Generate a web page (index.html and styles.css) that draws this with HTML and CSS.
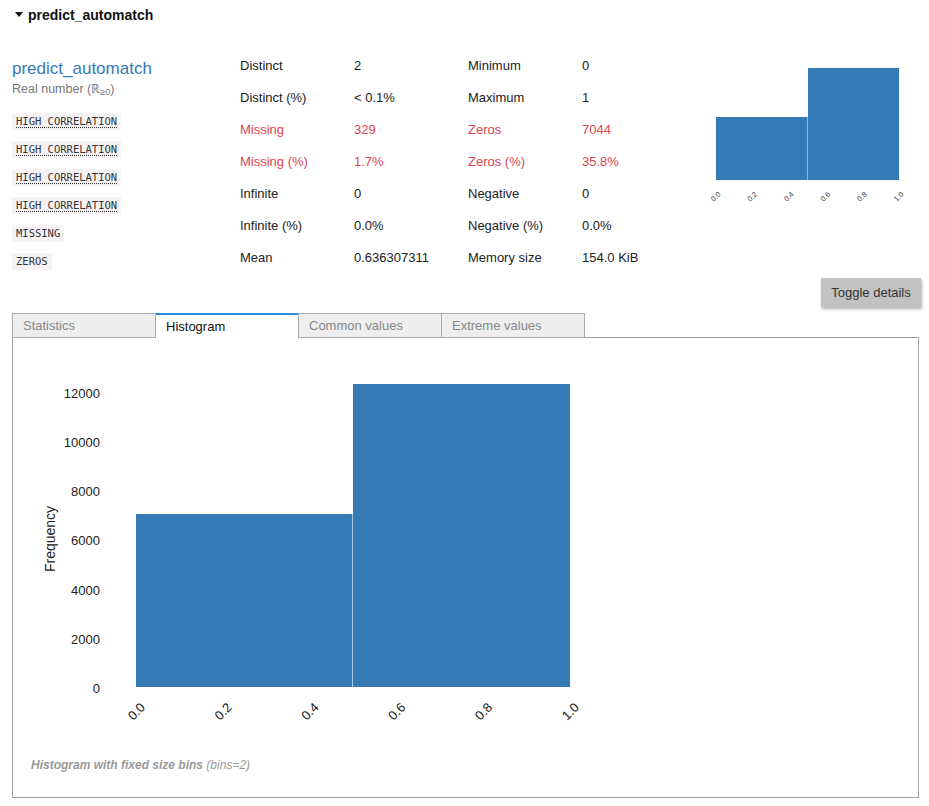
FILE: index.html
```html
<!DOCTYPE html>
<html>
<head>
<meta charset="utf-8">
<link rel="stylesheet" href="styles.css">
</head>
<body>
<div class="page">
  <div class="header"><span class="caret"></span>predict_automatch</div>

  <div class="overview">
    <div class="varinfo">
      <div class="varname">predict_automatch</div>
      <div class="vartype">Real number (ℝ<sub>≥0</sub>)</div>
      <div class="badges">
        <span class="badge"><abbr>HIGH CORRELATION</abbr></span>
        <span class="badge"><abbr>HIGH CORRELATION</abbr></span>
        <span class="badge"><abbr>HIGH CORRELATION</abbr></span>
        <span class="badge"><abbr>HIGH CORRELATION</abbr></span>
        <span class="badge">MISSING</span>
        <span class="badge">ZEROS</span>
      </div>
    </div>

    <div class="stats">
      <div class="cell">Distinct</div><div class="cell">2</div><div class="cell">Minimum</div><div class="cell">0</div>
      <div class="cell">Distinct (%)</div><div class="cell">&lt; 0.1%</div><div class="cell">Maximum</div><div class="cell">1</div>
      <div class="cell alert">Missing</div><div class="cell alert">329</div><div class="cell alert">Zeros</div><div class="cell alert">7044</div>
      <div class="cell alert">Missing (%)</div><div class="cell alert">1.7%</div><div class="cell alert">Zeros (%)</div><div class="cell alert">35.8%</div>
      <div class="cell">Infinite</div><div class="cell">0</div><div class="cell">Negative</div><div class="cell">0</div>
      <div class="cell">Infinite (%)</div><div class="cell">0.0%</div><div class="cell">Negative (%)</div><div class="cell">0.0%</div>
      <div class="cell">Mean</div><div class="cell">0.636307311</div><div class="cell">Memory size</div><div class="cell">154.0 KiB</div>
    </div>

    <svg class="mini" width="223" height="170" viewBox="0 0 223 170">
      <rect x="20" y="68" width="91" height="63" fill="#337ab7"/>
      <rect x="112" y="19" width="91" height="112" fill="#337ab7"/>
      <line x1="111.5" y1="68" x2="111.5" y2="131" stroke="#8fb8e0" stroke-width="1"/>
      <g class="mini-tick" font-size="7.5" fill="#444" text-anchor="middle">
        <text x="20" y="150" transform="rotate(-45 20 148)">0.0</text>
        <text x="56.6" y="150" transform="rotate(-45 56.6 148)">0.2</text>
        <text x="93.2" y="150" transform="rotate(-45 93.2 148)">0.4</text>
        <text x="129.8" y="150" transform="rotate(-45 129.8 148)">0.6</text>
        <text x="166.4" y="150" transform="rotate(-45 166.4 148)">0.8</text>
        <text x="203" y="150" transform="rotate(-45 203 148)">1.0</text>
      </g>
    </svg>
  </div>

  <div class="toolbar"><button class="toggle">Toggle details</button></div>

  <div class="tabs">
    <div class="tab">Statistics</div>
    <div class="tab active">Histogram</div>
    <div class="tab">Common values</div>
    <div class="tab">Extreme values</div>
  </div>
  <div class="panel">
    <svg class="chart" width="600" height="400" viewBox="0 0 600 400">
      <rect x="123" y="46" width="0" height="0" fill="none"/>
      <rect x="123" y="176" width="216" height="173" fill="#337ab7"/>
      <rect x="340" y="46" width="217" height="303" fill="#337ab7"/>
      <line x1="339.5" y1="176" x2="339.5" y2="349" stroke="#a9c8e6" stroke-width="1"/>
      <g class="ytick" font-size="13" fill="#222" text-anchor="end">
        <text x="87" y="355">0</text>
        <text x="87" y="306">2000</text>
        <text x="87" y="257">4000</text>
        <text x="87" y="207">6000</text>
        <text x="87" y="158">8000</text>
        <text x="87" y="109">10000</text>
        <text x="87" y="60">12000</text>
      </g>
      <text class="ylabel" x="37" y="201" font-size="14" fill="#222" text-anchor="middle" transform="rotate(-90 37 201)" dy="5">Frequency</text>
      <g class="xtick" font-size="13" fill="#222" text-anchor="middle">
        <text x="123" y="378" transform="rotate(-45 123 373)">0.0</text>
        <text x="209.8" y="378" transform="rotate(-45 209.8 373)">0.2</text>
        <text x="296.6" y="378" transform="rotate(-45 296.6 373)">0.4</text>
        <text x="383.4" y="378" transform="rotate(-45 383.4 373)">0.6</text>
        <text x="470.2" y="378" transform="rotate(-45 470.2 373)">0.8</text>
        <text x="557" y="378" transform="rotate(-45 557 373)">1.0</text>
      </g>
    </svg>
    <div class="caption"><strong>Histogram with fixed size bins</strong> (bins=2)</div>
  </div>
</div>
</body>
</html>
```

FILE: styles.css
```css
html, body {
  margin: 0;
  padding: 0;
  background: #fff;
}
body {
  font-family: "Liberation Sans", Arial, sans-serif;
  color: #222;
  font-size: 13px;
}
.page {
  padding: 0 9px 0 12px;
  width: 908px;
}
.header {
  height: 30px;
  display: flex;
  align-items: center;
  font-weight: bold;
  font-size: 14px;
  color: #111;
  padding-left: 3px;
}
.caret {
  width: 0;
  height: 0;
  border-left: 4px solid transparent;
  border-right: 4px solid transparent;
  border-top: 5px solid #111;
  margin-right: 5px;
  margin-top: -1px;
}
.overview {
  display: flex;
  margin-top: 19px;
}
.varinfo {
  width: 228px;
  flex: none;
}
.varname {
  font-size: 17px;
  color: #337ab7;
  line-height: 22px;
  margin-top: 9px;
}
.vartype {
  font-size: 12.5px;
  color: #777;
  line-height: 16px;
  margin-top: 1px;
}
.vartype sub {
  font-size: 9px;
  vertical-align: -2px;
}
.badges {
  display: flex;
  flex-direction: column;
  align-items: flex-start;
  gap: 11px;
  margin-top: 13px;
}
.badge {
  font-family: "DejaVu Sans Mono", "Liberation Mono", monospace;
  font-size: 10.5px;
  line-height: 17px;
  height: 17px;
  padding: 0 4px;
  background: #f7f2f4;
  color: #333;
}
.badge abbr {
  text-decoration: underline dotted;
  text-underline-offset: 2px;
}
.stats {
  display: grid;
  grid-template-columns: 114px 114px 114px 114px;
  grid-auto-rows: 32px;
  width: 456px;
  flex: none;
}
.cell {
  display: flex;
  align-items: center;
  font-size: 13px;
  color: #222;
}
.cell.alert {
  color: #e04450;
}
.mini {
  display: block;
  flex: none;
}
.mini-tick text {
  font-family: "Liberation Sans", Arial, sans-serif;
}
.toolbar {
  display: flex;
  justify-content: flex-end;
  margin-top: 5px;
  margin-right: -1px;
}
.toggle {
  font-family: "Liberation Sans", Arial, sans-serif;
  font-size: 13px;
  color: #333;
  background: #c2c2c2;
  border: none;
  width: 100px;
  height: 29px;
  box-shadow: 1px 2px 3px rgba(0, 0, 0, 0.3);
  padding: 0;
}
.tabs {
  display: flex;
  margin-top: 6px;
  height: 25px;
  position: relative;
  z-index: 1;
}
.tab {
  width: 143px;
  box-sizing: border-box;
  height: 25px;
  border: 1px solid #aaa;
  border-left: none;
  background: #eee;
  color: #888;
  font-size: 13px;
  padding-left: 10px;
  padding-bottom: 1px;
  display: flex;
  align-items: center;
}
.tab:first-child {
  border-left: 1px solid #aaa;
  width: 144px;
}
.tab.active {
  background: #fff;
  color: #111;
  border-top: 2px solid #2e8ee0;
  border-bottom: 1px solid #fff;
  height: 26px;
}
.panel {
  border: 1px solid #a0a0a0;
  margin-top: -1px;
  width: 907px;
  box-sizing: border-box;
  padding-bottom: 25px;
}
.chart {
  display: block;
}
.chart text {
  font-family: "Liberation Sans", Arial, sans-serif;
}
.caption {
  margin-top: 20px;
  padding-left: 18px;
  font-size: 12px;
  line-height: 14px;
  color: #999;
  font-style: italic;
}
.caption strong {
  font-weight: bold;
}
```
